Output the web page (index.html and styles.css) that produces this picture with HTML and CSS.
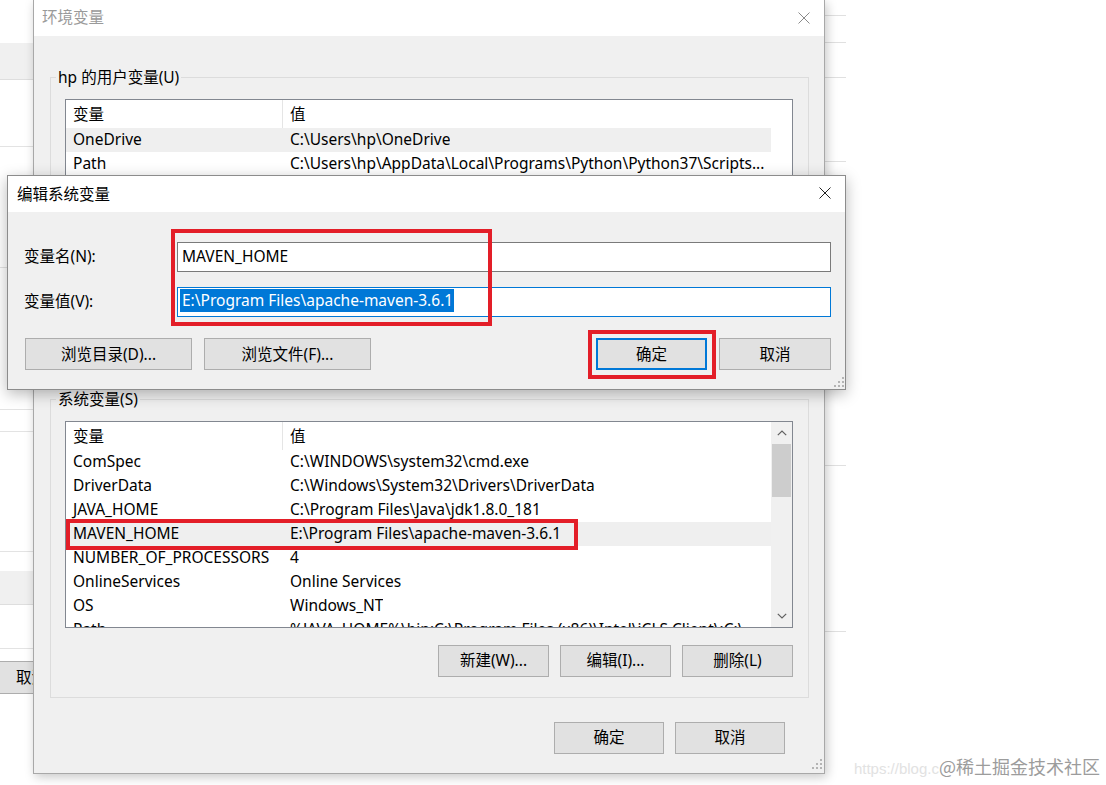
FILE: index.html
```html
<!DOCTYPE html>
<html lang="zh-CN">
<head>
<meta charset="utf-8">
<title>编辑系统变量</title>
<link rel="stylesheet" href="styles.css">
</head>
<body>
<div class="desktop">

  <div class="bg-left">
    <div class="bl bl-top"></div>
    <div class="bl bl-band"></div>
    <div class="bl bl-a"></div>
    <div class="bl bl-b"></div>
    <div class="bl bl-c"></div>
    <div class="bl bl-d"></div>
    <div class="bl bl-e"></div>
    <div class="bl bl-gap"></div>
    <div class="bl bl-band2"></div>
    <div class="bl bl-f"></div>
    <div class="bl bl-gap2"></div>
    <div class="bl-btn">取消</div>
  </div>

  <div class="bg-right">
    <div class="br br-1"></div>
    <div class="br br-2"></div>
    <div class="br br-3"></div>
    <div class="br br-4"></div>
    <div class="br br-5"></div>
    <div class="br br-6"></div>
  </div>

  <div class="win main-win">
    <div class="titlebar inactive">
      <span class="title">环境变量</span>
      <svg class="close" width="12" height="12" viewBox="0 0 12 12"><path d="M0.5 0.5L11.5 11.5M11.5 0.5L0.5 11.5" stroke="#8a8a8a" stroke-width="1" fill="none"/></svg>
    </div>
    <div class="win-body">
      <div class="group user-group">
        <div class="group-title">hp 的用户变量(U)</div>
        <div class="list">
          <div class="list-main">
            <div class="list-head"><div class="c1">变量</div><div class="c2">值</div></div>
            <div class="row hot"><div class="c1">OneDrive</div><div class="c2">C:\Users\hp\OneDrive</div></div>
            <div class="row"><div class="c1">Path</div><div class="c2">C:\Users\hp\AppData\Local\Programs\Python\Python37\Scripts...</div></div>
          </div>
          <div class="list-pad"></div>
        </div>
      </div>

      <div class="group sys-group">
        <div class="group-title">系统变量(S)</div>
        <div class="list">
          <div class="list-main">
            <div class="list-head"><div class="c1">变量</div><div class="c2">值</div></div>
            <div class="row"><div class="c1">ComSpec</div><div class="c2">C:\WINDOWS\system32\cmd.exe</div></div>
            <div class="row"><div class="c1">DriverData</div><div class="c2">C:\Windows\System32\Drivers\DriverData</div></div>
            <div class="row"><div class="c1">JAVA_HOME</div><div class="c2">C:\Program Files\Java\jdk1.8.0_181</div></div>
            <div class="row hot"><div class="c1">MAVEN_HOME</div><div class="c2">E:\Program Files\apache-maven-3.6.1</div></div>
            <div class="row"><div class="c1">NUMBER_OF_PROCESSORS</div><div class="c2">4</div></div>
            <div class="row"><div class="c1">OnlineServices</div><div class="c2">Online Services</div></div>
            <div class="row"><div class="c1">OS</div><div class="c2">Windows_NT</div></div>
            <div class="row"><div class="c1">Path</div><div class="c2">%JAVA_HOME%\bin;C:\Program Files (x86)\Intel\iCLS Client\;C:\...</div></div>
          </div>
          <div class="vscroll">
            <div class="arrow"><svg width="10" height="6" viewBox="0 0 10 6"><path d="M0.8 5.2L5 1L9.2 5.2" fill="none" stroke="#606060" stroke-width="1.2"/></svg></div>
            <div class="track"><div class="thumb"></div></div>
            <div class="arrow"><svg width="10" height="6" viewBox="0 0 10 6"><path d="M0.8 0.8L5 5L9.2 0.8" fill="none" stroke="#606060" stroke-width="1.2"/></svg></div>
          </div>
        </div>
        <div class="btn-row">
          <div class="btn grp-btn">新建(W)...</div>
          <div class="btn grp-btn">编辑(I)...</div>
          <div class="btn grp-btn">删除(L)</div>
        </div>
      </div>

      <div class="footer">
        <div class="btn foot-btn">确定</div>
        <div class="btn foot-btn">取消</div>
      </div>
      <svg class="grip main-grip" width="10" height="10" viewBox="0 0 10 10"><g fill="#b4b4b4"><rect x="8" y="0" width="2" height="2"/><rect x="4" y="4" width="2" height="2"/><rect x="8" y="4" width="2" height="2"/><rect x="0" y="8" width="2" height="2"/><rect x="4" y="8" width="2" height="2"/><rect x="8" y="8" width="2" height="2"/></g></svg>
    </div>
  </div>

  <div class="win edit-win">
    <div class="titlebar">
      <span class="title">编辑系统变量</span>
      <svg class="close" width="12" height="12" viewBox="0 0 12 12"><path d="M0.5 0.5L11.5 11.5M11.5 0.5L0.5 11.5" stroke="#222" stroke-width="1" fill="none"/></svg>
    </div>
    <div class="edit-body">
      <div class="form">
        <label class="flabel">变量名(N):</label>
        <div class="field">MAVEN_HOME</div>
        <label class="flabel">变量值(V):</label>
        <div class="field focused"><span class="selected">E:\Program Files\apache-maven-3.6.1</span></div>
      </div>
      <div class="edit-btns">
        <div class="btn-group">
          <div class="btn browse-btn">浏览目录(D)...</div>
          <div class="btn browse-btn">浏览文件(F)...</div>
        </div>
        <div class="btn-group">
          <div class="btn ok-btn default">确定</div>
          <div class="btn cancel-btn">取消</div>
        </div>
      </div>
      <svg class="grip edit-grip" width="10" height="10" viewBox="0 0 10 10"><g fill="#b4b4b4"><rect x="8" y="0" width="2" height="2"/><rect x="4" y="4" width="2" height="2"/><rect x="8" y="4" width="2" height="2"/><rect x="0" y="8" width="2" height="2"/><rect x="4" y="8" width="2" height="2"/><rect x="8" y="8" width="2" height="2"/></g></svg>
    </div>
  </div>

  <div class="mark mark-fields"></div>
  <div class="mark mark-ok"></div>
  <div class="mark mark-row"></div>

  <div class="watermark"><span class="wm-url">https://blog.c</span><span class="wm-site">@稀土掘金技术社区</span></div>
</div>
</body>
</html>
```

FILE: styles.css
```css
* { box-sizing: border-box; }

html, body {
  margin: 0;
  padding: 0;
  background: #ffffff;
}

body {
  font-family: "Noto Sans", "Noto Sans CJK SC", sans-serif;
  font-size: 15.5px;
  color: #000;
}

.desktop {
  position: relative;
  width: 1106px;
  height: 785px;
  overflow: hidden;
  background: #ffffff;
}

/* background window pieces */
.bg-left {
  position: absolute;
  left: 0;
  top: 0;
  width: 60px;
  height: 785px;
  display: flex;
  flex-direction: column;
  background: #fff;
}
.bl { border-bottom: 1px solid #e3e3e3; }
.bl-top { height: 43px; border-bottom: none; }
.bl-band { height: 37px; background: #f0f0f0; border-bottom: 1px solid #dedede; }
.bl-a { height: 67px; }
.bl-b { height: 121px; }
.bl-c { height: 142px; }
.bl-d { height: 22px; }
.bl-e { height: 120px; }
.bl-gap { height: 19px; border-bottom: none; }
.bl-band2 { height: 34px; background: #f0f0f0; border-bottom: 1px solid #dedede; }
.bl-f { height: 44px; }
.bl-gap2 { height: 12px; border-bottom: none; }
.bl-btn {
  height: 33px;
  width: 60px;
  background: #e1e1e1;
  border-top: 1px solid #adadad;
  border-bottom: 1px solid #adadad;
  padding-left: 16px;
  line-height: 30px;
  white-space: nowrap;
}

.bg-right {
  position: absolute;
  left: 820px;
  top: 0;
  width: 26px;
  height: 785px;
  display: flex;
  flex-direction: column;
}
.br { border-bottom: 1px solid #e0e0e0; }
.br-1 { height: 16px; }
.br-2 { height: 27px; }
.br-3 { height: 35px; }
.br-4 { height: 84px; }
.br-5 { height: 304px; }
.br-6 { height: 166px; }

/* windows */
.win {
  position: absolute;
  background: #f0f0f0;
}

.main-win {
  left: 33px;
  top: 0;
  width: 792px;
  border-left: 1px solid #a8a8a8;
  border-right: 1px solid #a8a8a8;
  border-bottom: 1px solid #a8a8a8;
  box-shadow: 2px 3px 10px rgba(0, 0, 0, 0.22);
}

.titlebar {
  display: flex;
  align-items: center;
  justify-content: space-between;
  background: #ffffff;
  white-space: nowrap;
}

.main-win .titlebar {
  height: 36px;
  padding: 0 14px 3px 8px;
}
.main-win .titlebar .close { margin-top: 3px; }
.titlebar.inactive .title { color: #9a9a9a; }

.win-body {
  position: relative;
  padding: 41px 15px 19px 16px;
}

.group {
  border: 1px solid #dcdcdc;
  padding: 0 15px 20px 14px;
}
.user-group { padding-bottom: 70px; }
.sys-group { margin-top: 21px; }

.group-title {
  width: fit-content;
  margin: -11px 0 0 -9px;
  padding: 0 2px;
  line-height: 20px;
  height: 20px;
  background: #f0f0f0;
  white-space: nowrap;
}

.list {
  margin-top: 12px;
  height: 208px;
  background: #ffffff;
  border: 1px solid #828790;
  display: flex;
  overflow: hidden;
}
.sys-group .list { margin-top: 12px; height: 207px; }
.list-main {
  flex: 1;
  overflow: hidden;
  min-width: 0;
}
.list-pad {
  width: 21px;
  flex: none;
}

.list-head, .row {
  display: flex;
  white-space: nowrap;
}
.list-head {
  height: 28px;
  line-height: 29px;
}
.list-head .c1 { border-right: 1px solid #e5e5e5; }
.row {
  height: 24px;
  line-height: 22px;
}
.row.hot { background: #efefef; }
.c1 {
  width: 217px;
  flex: none;
  padding-left: 7px;
}
.c2 {
  padding-left: 7px;
  overflow: hidden;
}

.vscroll {
  width: 21px;
  flex: none;
  background: #f0f0f0;
  display: flex;
  flex-direction: column;
}
.vscroll .arrow {
  height: 22px;
  display: flex;
  align-items: center;
  justify-content: center;
}
.vscroll .track {
  flex: 1;
  padding: 0 1px;
}
.vscroll .thumb {
  height: 53px;
  background: #cdcdcd;
}

.btn {
  background: #e1e1e1;
  border: 1px solid #adadad;
  text-align: center;
  white-space: nowrap;
}

.btn-row {
  margin-top: 17px;
  display: flex;
  justify-content: flex-end;
  gap: 11px;
}
.grp-btn {
  width: 111px;
  height: 32px;
  line-height: 29px;
}

.footer {
  margin-top: 24px;
  display: flex;
  justify-content: flex-end;
  gap: 11px;
  padding-right: 24px;
}
.foot-btn {
  width: 110px;
  height: 32px;
  line-height: 29px;
}

.grip {
  position: absolute;
  display: block;
}
.main-grip { right: 2px; bottom: 4px; }
.edit-grip { right: 1px; bottom: 2px; }

/* edit dialog */
.edit-win {
  left: 7px;
  top: 175px;
  width: 839px;
  border: 1px solid #8c8c8c;
  box-shadow: 0 4px 14px rgba(0, 0, 0, 0.28);
}
.edit-win .titlebar {
  height: 36px;
  padding: 0 14px 2px 9px;
}

.edit-body {
  position: relative;
  padding: 30px 14px 19px 16px;
}

.form {
  display: grid;
  grid-template-columns: 153px 1fr;
  row-gap: 15px;
  align-items: center;
}
.flabel {
  white-space: nowrap;
  line-height: 26px;
  padding-bottom: 2px;
}
.field {
  height: 30px;
  background: #ffffff;
  border: 1px solid #7a7a7a;
  padding-left: 4px;
  line-height: 26px;
  white-space: nowrap;
}
.field.focused { border-color: #0078d7; }
.selected {
  display: inline-block;
  background: #0078d7;
  color: #ffffff;
  line-height: 23px;
  margin-left: -2px;
  margin-top: 1px;
  padding: 0 1px 0 2px;
  vertical-align: top;
}

.edit-btns {
  margin-top: 21px;
  display: flex;
  justify-content: space-between;
}
.btn-group {
  display: flex;
  gap: 12px;
}
.browse-btn {
  width: 167px;
  height: 32px;
  line-height: 30px;
  margin-left: 1px;
}
.browse-btn + .browse-btn { margin-left: 0; }
.ok-btn {
  width: 111px;
  height: 32px;
  line-height: 28px;
}
.ok-btn.default { border: 2px solid #0078d7; }
.cancel-btn {
  width: 112px;
  height: 32px;
  line-height: 30px;
}

/* red annotation boxes */
.mark {
  position: absolute;
  border: 4px solid #e31e28;
  pointer-events: none;
}
.mark-fields { left: 171px; top: 229px; width: 321px; height: 97px; }
.mark-ok { left: 588px; top: 330px; width: 128px; height: 49px; }
.mark-row { left: 66px; top: 519px; width: 512px; height: 31px; }

/* watermark */
.watermark {
  position: absolute;
  right: 6px;
  bottom: 6px;
  white-space: nowrap;
  display: flex;
  align-items: baseline;
}
.wm-url {
  font-family: "Liberation Sans", sans-serif;
  font-size: 15px;
  color: #e2e2e2;
}
.wm-site {
  font-family: "Noto Sans CJK SC", sans-serif;
  font-size: 18px;
  color: #9c9c9c;
}
```
